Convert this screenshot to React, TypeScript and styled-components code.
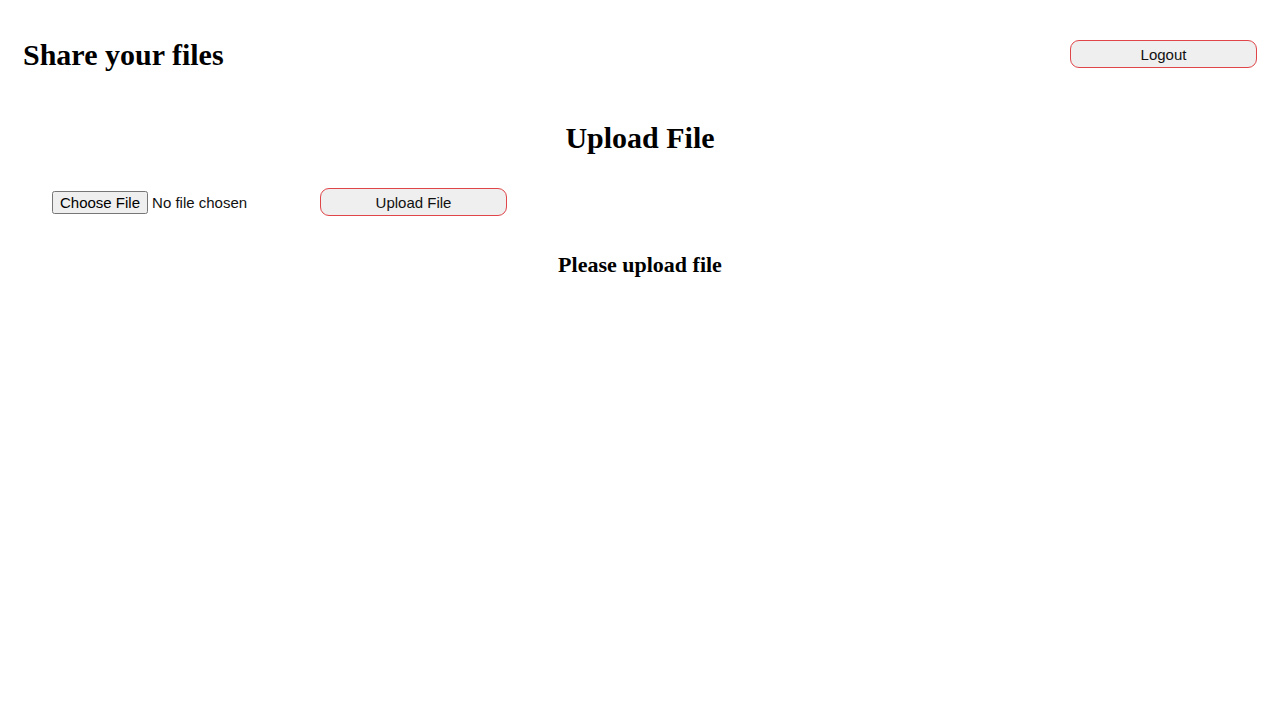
import React from "react";
import styled, { createGlobalStyle } from "styled-components";

const Global = createGlobalStyle`
  html, body { margin: 0; padding: 0; background: #fff; }
  body { font-family: "Liberation Serif", "Times New Roman", serif; color: #000; }
`;

const Page = styled.div`
  display: flex;
  flex-direction: column;
`;

const Header = styled.header`
  display: flex;
  justify-content: space-between;
  align-items: flex-start;
  padding: 38px 23px 0 23px;
`;

const Title = styled.h1`
  margin: 0;
  font-size: 30px;
  font-weight: bold;
`;

const PillButton = styled.button`
  width: 187px;
  height: 28px;
  background: #efefef;
  border: 1px solid #e0454a;
  border-radius: 9px;
  font-family: "Liberation Sans", Arial, sans-serif;
  font-size: 15px;
  color: #111;
  padding: 0;
  cursor: pointer;
`;

const LogoutButton = styled(PillButton)`
  margin-top: 2px;
`;

const Heading = styled.h2`
  margin: 49px 0 0 0;
  text-align: center;
  font-size: 30px;
  font-weight: bold;
`;

const UploadRow = styled.div`
  display: flex;
  align-items: center;
  margin-top: 33px;
  padding-left: 52px;
`;

const FileInput = styled.input`
  width: 268px;
  font-family: "Liberation Sans", Arial, sans-serif;
  font-size: 15px;
  color: #111;
`;

const Status = styled.h3`
  margin: 36px 0 0 0;
  text-align: center;
  font-size: 22px;
  font-weight: bold;
`;

export default function App() {
  return (
    <Page>
      <Global />
      <Header>
        <Title>Share your files</Title>
        <LogoutButton>Logout</LogoutButton>
      </Header>
      <Heading>Upload File</Heading>
      <UploadRow>
        <FileInput type="file" />
        <PillButton>Upload File</PillButton>
      </UploadRow>
      <Status>Please upload file</Status>
    </Page>
  );
}
